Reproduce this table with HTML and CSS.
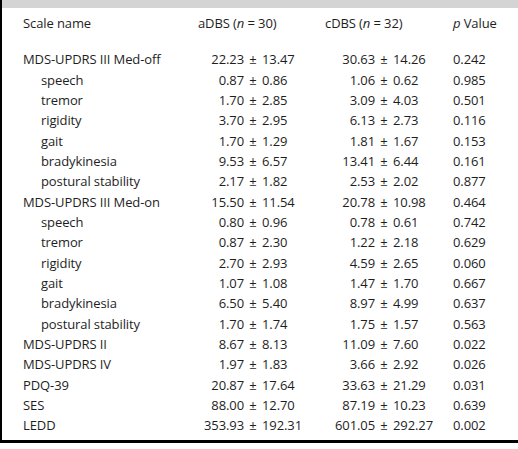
FILE: index.html
```html
<!DOCTYPE html>
<html lang="en">
<head>
  <meta charset="UTF-8" />
  <meta name="viewport" content="width=device-width, initial-scale=1.0" />
  <title>Clinical scales: aDBS vs cDBS</title>
  <link rel="stylesheet" href="styles.css">
</head>
<body>
  <div class="frame">
    <div class="topbar"></div>
    <table class="scales">
      <colgroup>
        <col class="c-name" />
        <col class="c-left" />
        <col class="c-pm" />
        <col class="c-right" />
        <col class="c-left2" />
        <col class="c-pm" />
        <col class="c-right2" />
        <col class="c-p" />
      </colgroup>
      <thead>
        <tr>
          <th class="name">Scale name</th>
          <th colspan="3" class="grp-a">aDBS (<i>n</i> = 30)</th>
          <th colspan="3" class="grp-c">cDBS (<i>n</i> = 32)</th>
          <th class="pval"><i>p</i> Value</th>
        </tr>
      </thead>
      <tbody>
        <tr class="first"><td class="name">MDS-UPDRS III Med-off</td><td class="l">22.23</td><td class="pm">±</td><td class="r">13.47</td><td class="l">30.63</td><td class="pm">±</td><td class="r">14.26</td><td class="pval">0.242</td></tr>
        <tr><td class="name sub">speech</td><td class="l">0.87</td><td class="pm">±</td><td class="r">0.86</td><td class="l">1.06</td><td class="pm">±</td><td class="r">0.62</td><td class="pval">0.985</td></tr>
        <tr><td class="name sub">tremor</td><td class="l">1.70</td><td class="pm">±</td><td class="r">2.85</td><td class="l">3.09</td><td class="pm">±</td><td class="r">4.03</td><td class="pval">0.501</td></tr>
        <tr><td class="name sub">rigidity</td><td class="l">3.70</td><td class="pm">±</td><td class="r">2.95</td><td class="l">6.13</td><td class="pm">±</td><td class="r">2.73</td><td class="pval">0.116</td></tr>
        <tr><td class="name sub">gait</td><td class="l">1.70</td><td class="pm">±</td><td class="r">1.29</td><td class="l">1.81</td><td class="pm">±</td><td class="r">1.67</td><td class="pval">0.153</td></tr>
        <tr><td class="name sub">bradykinesia</td><td class="l">9.53</td><td class="pm">±</td><td class="r">6.57</td><td class="l">13.41</td><td class="pm">±</td><td class="r">6.44</td><td class="pval">0.161</td></tr>
        <tr><td class="name sub">postural stability</td><td class="l">2.17</td><td class="pm">±</td><td class="r">1.82</td><td class="l">2.53</td><td class="pm">±</td><td class="r">2.02</td><td class="pval">0.877</td></tr>
        <tr><td class="name">MDS-UPDRS III Med-on</td><td class="l">15.50</td><td class="pm">±</td><td class="r">11.54</td><td class="l">20.78</td><td class="pm">±</td><td class="r">10.98</td><td class="pval">0.464</td></tr>
        <tr><td class="name sub">speech</td><td class="l">0.80</td><td class="pm">±</td><td class="r">0.96</td><td class="l">0.78</td><td class="pm">±</td><td class="r">0.61</td><td class="pval">0.742</td></tr>
        <tr><td class="name sub">tremor</td><td class="l">0.87</td><td class="pm">±</td><td class="r">2.30</td><td class="l">1.22</td><td class="pm">±</td><td class="r">2.18</td><td class="pval">0.629</td></tr>
        <tr><td class="name sub">rigidity</td><td class="l">2.70</td><td class="pm">±</td><td class="r">2.93</td><td class="l">4.59</td><td class="pm">±</td><td class="r">2.65</td><td class="pval">0.060</td></tr>
        <tr><td class="name sub">gait</td><td class="l">1.07</td><td class="pm">±</td><td class="r">1.08</td><td class="l">1.47</td><td class="pm">±</td><td class="r">1.70</td><td class="pval">0.667</td></tr>
        <tr><td class="name sub">bradykinesia</td><td class="l">6.50</td><td class="pm">±</td><td class="r">5.40</td><td class="l">8.97</td><td class="pm">±</td><td class="r">4.99</td><td class="pval">0.637</td></tr>
        <tr><td class="name sub">postural stability</td><td class="l">1.70</td><td class="pm">±</td><td class="r">1.74</td><td class="l">1.75</td><td class="pm">±</td><td class="r">1.57</td><td class="pval">0.563</td></tr>
        <tr><td class="name">MDS-UPDRS II</td><td class="l">8.67</td><td class="pm">±</td><td class="r">8.13</td><td class="l">11.09</td><td class="pm">±</td><td class="r">7.60</td><td class="pval">0.022</td></tr>
        <tr><td class="name">MDS-UPDRS IV</td><td class="l">1.97</td><td class="pm">±</td><td class="r">1.83</td><td class="l">3.66</td><td class="pm">±</td><td class="r">2.92</td><td class="pval">0.026</td></tr>
        <tr><td class="name">PDQ-39</td><td class="l">20.87</td><td class="pm">±</td><td class="r">17.64</td><td class="l">33.63</td><td class="pm">±</td><td class="r">21.29</td><td class="pval">0.031</td></tr>
        <tr><td class="name">SES</td><td class="l">88.00</td><td class="pm">±</td><td class="r">12.70</td><td class="l">87.19</td><td class="pm">±</td><td class="r">10.23</td><td class="pval">0.639</td></tr>
        <tr><td class="name">LEDD</td><td class="l">353.93</td><td class="pm">±</td><td class="r">192.31</td><td class="l">601.05</td><td class="pm">±</td><td class="r">292.27</td><td class="pval">0.002</td></tr>
      </tbody>
    </table>
  </div>
</body>
</html>
```

FILE: styles.css
```css
html, body { overflow: hidden; }
body { margin: 0; background: #fff; font-family: "Open Sans", "Noto Sans", sans-serif; color: #1e1e1e; }
.frame {
  height: 443px;
  box-shadow: inset 2px 0 0 #000, inset 0 -3px 0 #000;
}
.topbar {
  height: 8px;
  margin-bottom: 5px;
  background: #d4d4d4;
  box-shadow: inset 2px 0 0 #000;
}
.scales {
  width: 490px;
  margin-left: 2px;
  table-layout: fixed;
  border-collapse: collapse;
  font-size: 13px;
  letter-spacing: -0.1px;
}
.c-name { width: 188px; }
.c-left { width: 54px; }
.c-pm { width: 18px; }
.c-right { width: 58px; }
.c-left2 { width: 55px; }
.c-right2 { width: 52px; }
.c-p { width: 47px; }

.scales th, .scales td {
  padding: 0;
  height: 20.33px;
  line-height: 20.33px;
  font-weight: normal;
  white-space: nowrap;
  text-align: left;
}
.scales .name { padding-left: 21px; }
.scales .name.sub { padding-left: 39px; }
.scales .grp-a { padding-left: 8px; }
.scales .grp-c { padding-left: 5px; }
.scales .pval { padding-left: 8px; }
.scales td.l { text-align: right; }
.scales td.pm { text-align: center; }
.scales td.r { text-align: left; }
.scales tr.first td { padding-top: 16px; }
```
